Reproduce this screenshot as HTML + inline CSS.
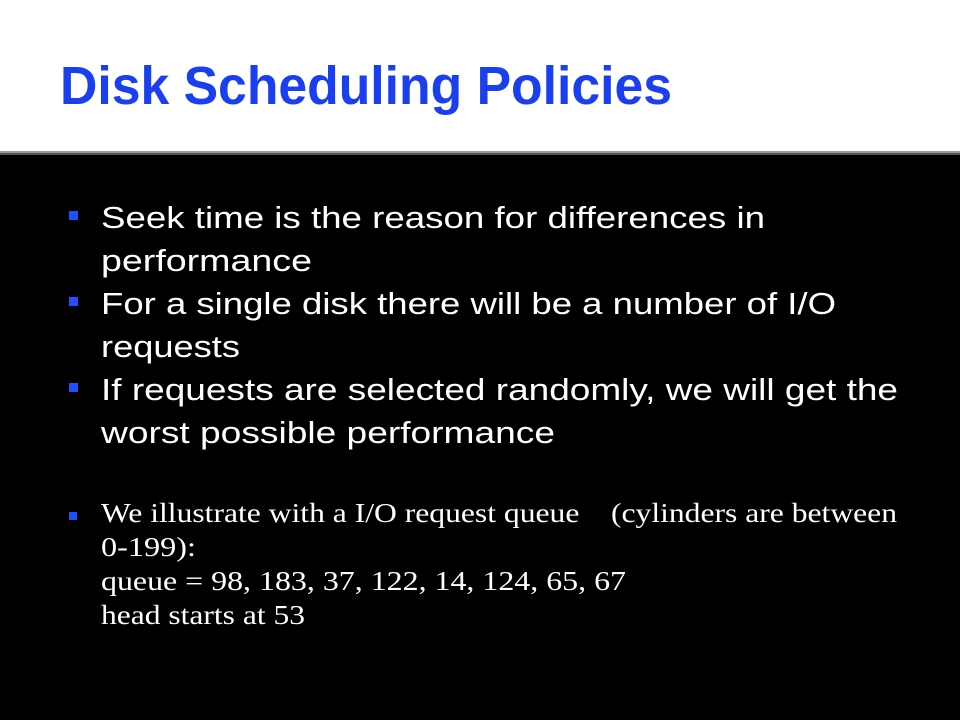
<!DOCTYPE html>
<html><head><style>
html,body{margin:0;padding:0;width:960px;height:720px;overflow:hidden;background:#000}
</style></head><body>
<svg width="960" height="720" xmlns="http://www.w3.org/2000/svg">
<rect x="0" y="0" width="960" height="720" fill="#000"/>
<rect x="0" y="0" width="960" height="151" fill="#fff"/>
<rect x="0" y="151" width="960" height="2" fill="#9a9a9a"/>
<rect x="0" y="153" width="960" height="2" fill="#555"/>
<text x="60" y="104" font-family="Liberation Sans, sans-serif" font-weight="bold" font-size="54" fill="#1a3ff0" textLength="612" lengthAdjust="spacingAndGlyphs">Disk Scheduling Policies</text>
<g fill="#1e50ff">
<rect x="69" y="211" width="9" height="9"/>
<rect x="69" y="297" width="9" height="9"/>
<rect x="69" y="383" width="9" height="9"/>
<rect x="69" y="512" width="8" height="8"/>
</g>
<g font-family="Liberation Sans, sans-serif" font-size="31" fill="#fff">
<text x="101" y="228" textLength="664" lengthAdjust="spacingAndGlyphs">Seek time is the reason for differences in</text>
<text x="101" y="271" textLength="211" lengthAdjust="spacingAndGlyphs">performance</text>
<text x="101" y="314" textLength="735" lengthAdjust="spacingAndGlyphs">For a single disk there will be a number of I/O</text>
<text x="101" y="357" textLength="139" lengthAdjust="spacingAndGlyphs">requests</text>
<text x="101" y="400" textLength="797" lengthAdjust="spacingAndGlyphs">If requests are selected randomly, we will get the</text>
<text x="101" y="443" textLength="454" lengthAdjust="spacingAndGlyphs">worst possible performance</text>
</g>
<g font-family="Liberation Serif, serif" font-size="27" fill="#fff">
<text x="101" y="522" textLength="796" lengthAdjust="spacingAndGlyphs" xml:space="preserve">We illustrate with a I/O request queue    (cylinders are between</text>
<text x="101" y="556" textLength="95" lengthAdjust="spacingAndGlyphs">0-199):</text>
<text x="101" y="590" textLength="525" lengthAdjust="spacingAndGlyphs">queue = 98, 183, 37, 122, 14, 124, 65, 67</text>
<text x="101" y="624" textLength="204" lengthAdjust="spacingAndGlyphs">head starts at 53</text>
</g>
</svg>
</body></html>
